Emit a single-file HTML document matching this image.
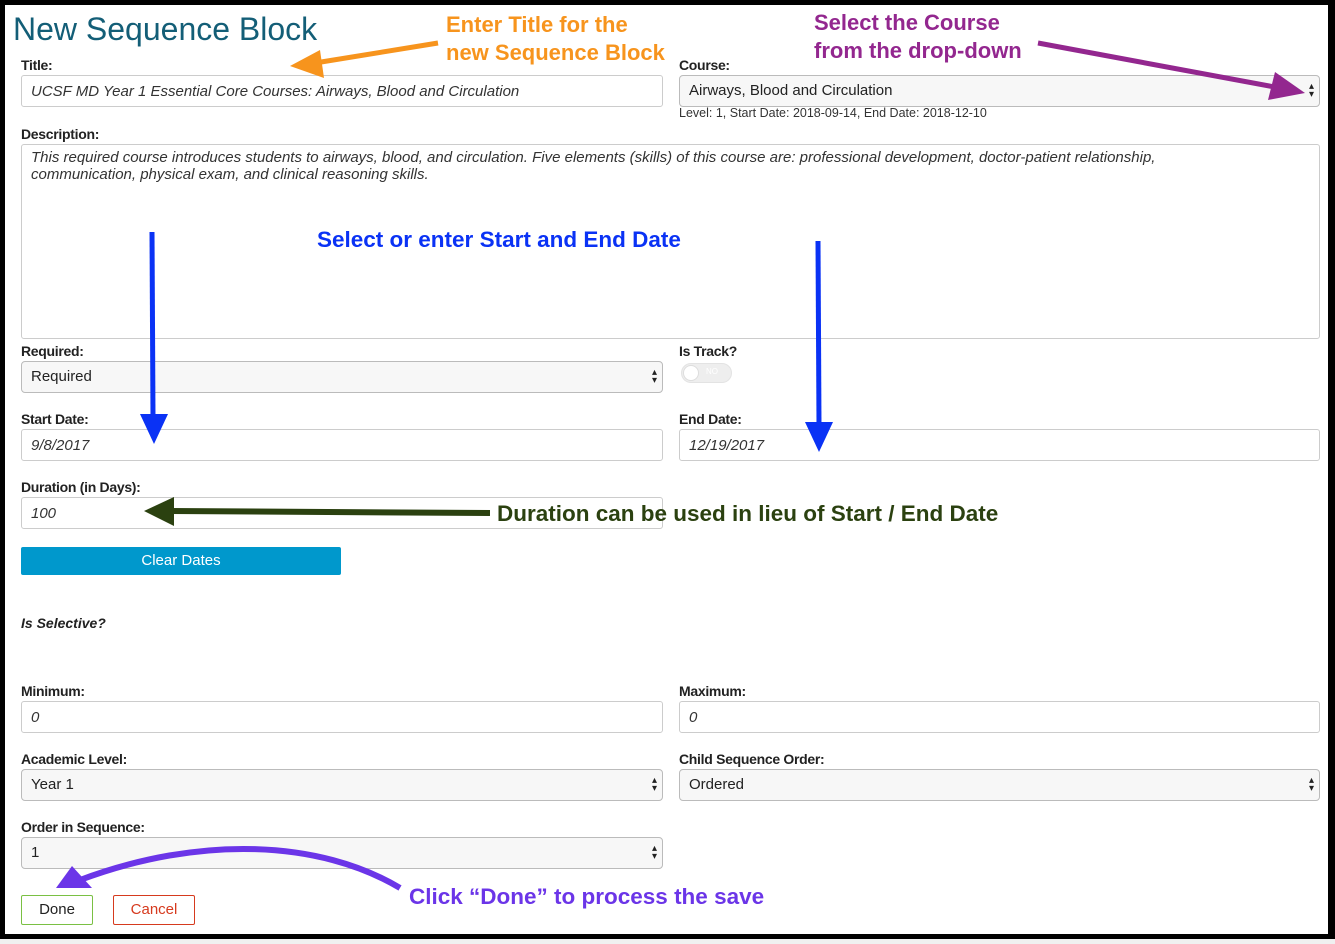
<!DOCTYPE html>
<html><head><style>
body{margin:0;width:1335px;height:944px;background:#f0f0f0;position:relative;overflow:hidden;font-family:"Liberation Sans",sans-serif;}
#frame{position:absolute;left:0;top:0;width:1335px;height:939px;background:#000;}
#page{position:absolute;left:5px;top:5px;width:1323px;height:929px;background:#fff;}
.a{position:absolute;}
.lbl{position:absolute;font-size:14px;font-weight:bold;color:#222;letter-spacing:-0.3px;}
.in{position:absolute;border:1px solid #ccc;border-radius:3px;background:#fff;font-size:15px;font-style:italic;color:#333;line-height:32px;padding-left:9px;box-sizing:border-box;height:32px;}
.sel{position:absolute;height:32px;border:1px solid #bbb;border-radius:4px;background:#f7f7f7;font-size:15px;color:#222;line-height:30px;padding-left:9px;box-sizing:border-box;}
.sel:after{content:"▴\A▾";white-space:pre;position:absolute;right:5px;top:7px;font-size:10px;line-height:8px;color:#222;}
.ann{position:absolute;font-weight:bold;font-size:22px;line-height:28px;}
</style></head><body>
<div id="frame"></div>
<div id="page"></div>
<div class="a" style="left:13px;top:11px;font-size:32px;color:#135e77;">New Sequence Block</div>
<div class="lbl" style="left:21px;top:57px">Title:</div>
<div class="in" style="left:21px;top:75px;width:642px;">UCSF MD Year 1 Essential Core Courses: Airways, Blood and Circulation</div>
<div class="lbl" style="left:679px;top:57px">Course:</div>
<div class="sel" style="left:679px;top:75px;width:641px;font-style:normal;line-height:30px">Airways, Blood and Circulation</div>
<div class="a" style="left:679px;top:106px;font-size:12.5px;color:#333">Level: 1, Start Date: 2018-09-14, End Date: 2018-12-10</div>
<div class="lbl" style="left:21px;top:126px">Description:</div>
<div class="a" style="left:21px;top:144px;width:1299px;height:195px;border:1px solid #ccc;border-radius:3px;box-sizing:border-box;font-size:15px;font-style:italic;color:#333;padding:4px 9px;line-height:17px;">This required course introduces students to airways, blood, and circulation. Five elements (skills) of this course are: professional development, doctor-patient relationship,<br>communication, physical exam, and clinical reasoning skills.</div>
<div class="lbl" style="left:21px;top:343px">Required:</div>
<div class="sel" style="left:21px;top:361px;width:642px;">Required</div>
<div class="lbl" style="left:679px;top:343px">Is Track?</div>
<div class="a" style="left:681px;top:363px;width:51px;height:20px;border-radius:10px;background:#eee;border:1px solid #e3e3e3;box-sizing:border-box"><div style="position:absolute;left:1px;top:1px;width:16px;height:16px;border-radius:50%;background:#fff;border:1px solid #ddd;box-sizing:border-box"></div><span style="position:absolute;left:24px;top:3px;font-size:8px;color:#fff">NO</span></div>
<div class="lbl" style="left:21px;top:411px">Start Date:</div>
<div class="in" style="left:21px;top:429px;width:642px;">9/8/2017</div>
<div class="lbl" style="left:679px;top:411px">End Date:</div>
<div class="in" style="left:679px;top:429px;width:641px;">12/19/2017</div>
<div class="lbl" style="left:21px;top:479px">Duration (in Days):</div>
<div class="in" style="left:21px;top:497px;width:642px;">100</div>
<div class="a" style="left:21px;top:547px;width:320px;height:28px;background:#0098cc;border-radius:2px;color:#fff;font-size:15px;text-align:center;line-height:28px;">Clear Dates</div>
<div class="a" style="left:21px;top:615px;font-size:14px;font-weight:bold;font-style:italic;color:#222">Is Selective?</div>
<div class="lbl" style="left:21px;top:683px">Minimum:</div>
<div class="in" style="left:21px;top:701px;width:642px;">0</div>
<div class="lbl" style="left:679px;top:683px">Maximum:</div>
<div class="in" style="left:679px;top:701px;width:641px;">0</div>
<div class="lbl" style="left:21px;top:751px">Academic Level:</div>
<div class="sel" style="left:21px;top:769px;width:642px;">Year 1</div>
<div class="lbl" style="left:679px;top:751px">Child Sequence Order:</div>
<div class="sel" style="left:679px;top:769px;width:641px;">Ordered</div>
<div class="lbl" style="left:21px;top:819px">Order in Sequence:</div>
<div class="sel" style="left:21px;top:837px;width:642px;">1</div>
<div class="a" style="left:21px;top:895px;width:72px;height:30px;border:1px solid #7ac043;border-radius:2px;box-sizing:border-box;text-align:center;line-height:28px;font-size:15px;color:#222">Done</div>
<div class="a" style="left:113px;top:895px;width:82px;height:30px;border:1px solid #d63a1e;border-radius:2px;box-sizing:border-box;text-align:center;line-height:28px;font-size:15px;color:#d63a1e">Cancel</div>

<div class="ann" style="left:446px;top:11px;color:#f7941d">Enter Title for the<br>new Sequence Block</div>
<div class="ann" style="left:814px;top:9px;color:#93278f">Select the Course<br>from the drop-down</div>
<div class="ann" style="left:317px;top:226px;color:#0a32f5;font-size:22.5px">Select or enter Start and End Date</div>
<div class="ann" style="left:497px;top:500px;color:#2b4110;font-size:22.5px">Duration can be used in lieu of Start / End Date</div>
<div class="ann" style="left:409px;top:883px;color:#6b35e8;font-size:22.5px">Click “Done” to process the save</div>

<svg class="a" style="left:0;top:0" width="1335" height="944">
<line x1="438" y1="43" x2="315" y2="63" stroke="#f7941d" stroke-width="5"/>
<polygon points="290,66 320,50 324,78" fill="#f7941d"/>
<line x1="1038" y1="43" x2="1280" y2="88" stroke="#93278f" stroke-width="5"/>
<polygon points="1305,93 1275,72 1268,100" fill="#93278f"/>
<line x1="152" y1="232" x2="153" y2="418" stroke="#0a32f5" stroke-width="5"/>
<polygon points="140,414 168,414 154,444" fill="#0a32f5"/>
<line x1="818" y1="241" x2="819" y2="425" stroke="#0a32f5" stroke-width="5"/>
<polygon points="805,422 833,422 819,452" fill="#0a32f5"/>
<line x1="490" y1="513" x2="170" y2="511" stroke="#2b4110" stroke-width="6"/>
<polygon points="144,511 174,497 174,526" fill="#2b4110"/>
<path d="M400,888 C320,840 200,835 80,880" fill="none" stroke="#6b35e8" stroke-width="6"/>
<polygon points="56,888 72,866 92,888" fill="#6b35e8"/>
</svg>
</body></html>
